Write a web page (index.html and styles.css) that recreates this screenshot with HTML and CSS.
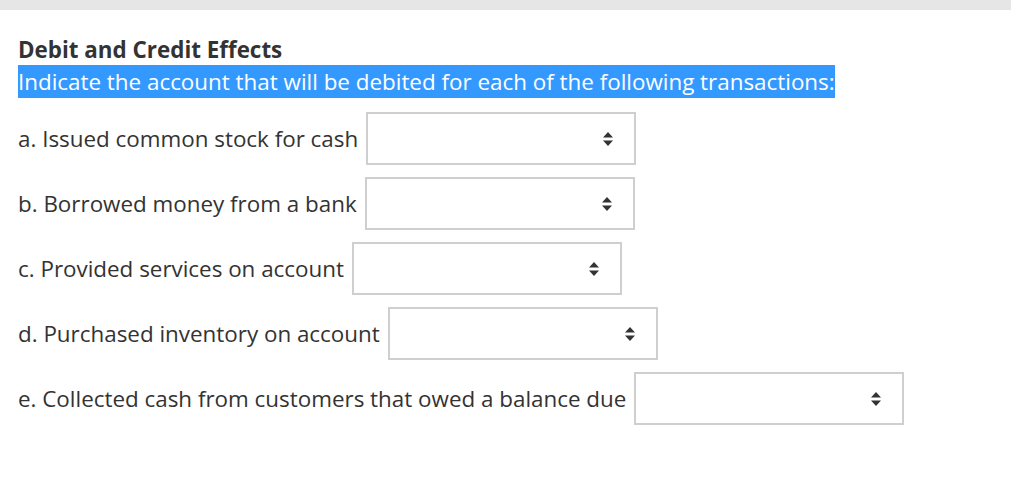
FILE: index.html
```html
<!DOCTYPE html>
<html>
<head>
<meta charset="utf-8">
<link rel="stylesheet" href="styles.css">
</head>
<body>
<div class="topbar"></div>
<div class="content">
  <div class="title">Debit and Credit Effects</div>
  <div class="instr"><span class="hl">Indicate the account that will be debited for each of the following transactions:</span></div>
  <div class="rows">
    <div class="row"><span class="label">a. Issued common stock for cash</span><div class="sel"><svg class="arr" width="10" height="14" viewBox="0 0 10 14"><path d="M5 0 L10 5.5 L0 5.5 Z M0 8.5 L10 8.5 L5 14 Z" fill="#333"/></svg></div></div>
    <div class="row"><span class="label">b. Borrowed money from a bank</span><div class="sel"><svg class="arr" width="10" height="14" viewBox="0 0 10 14"><path d="M5 0 L10 5.5 L0 5.5 Z M0 8.5 L10 8.5 L5 14 Z" fill="#333"/></svg></div></div>
    <div class="row"><span class="label">c. Provided services on account</span><div class="sel"><svg class="arr" width="10" height="14" viewBox="0 0 10 14"><path d="M5 0 L10 5.5 L0 5.5 Z M0 8.5 L10 8.5 L5 14 Z" fill="#333"/></svg></div></div>
    <div class="row"><span class="label">d. Purchased inventory on account</span><div class="sel"><svg class="arr" width="10" height="14" viewBox="0 0 10 14"><path d="M5 0 L10 5.5 L0 5.5 Z M0 8.5 L10 8.5 L5 14 Z" fill="#333"/></svg></div></div>
    <div class="row"><span class="label">e. Collected cash from customers that owed a balance due</span><div class="sel"><svg class="arr" width="10" height="14" viewBox="0 0 10 14"><path d="M5 0 L10 5.5 L0 5.5 Z M0 8.5 L10 8.5 L5 14 Z" fill="#333"/></svg></div></div>
  </div>
</div>
</body>
</html>
```
FILE: styles.css
```css
html, body {
  margin: 0;
  padding: 0;
  background: #fff;
  font-family: "Open Sans", sans-serif;
  color: #333;
}
.topbar {
  height: 10px;
  background: #e6e6e6;
}
.content {
  padding: 25px 0 0 18px;
}
.title {
  font-weight: 700;
  font-size: 22.4px;
  line-height: 30px;
  color: #333;
}
.instr {
  font-size: 22.4px;
  line-height: 33px;
  height: 33px;
}
.hl {
  display: inline-block;
  line-height: 33px;
  background: #3399ff;
  color: #fff;
}
.rows {
  display: flex;
  flex-direction: column;
  gap: 12px;
  margin-top: 14px;
}
.row {
  display: flex;
  align-items: center;
  gap: 8px;
}
.label {
  font-size: 22.4px;
  color: #333;
}
.sel {
  box-sizing: border-box;
  width: 270px;
  height: 53px;
  border: 2px solid #cfcfcf;
  background: #fff;
  display: flex;
  align-items: center;
  justify-content: flex-end;
  padding-right: 21px;
}
```
